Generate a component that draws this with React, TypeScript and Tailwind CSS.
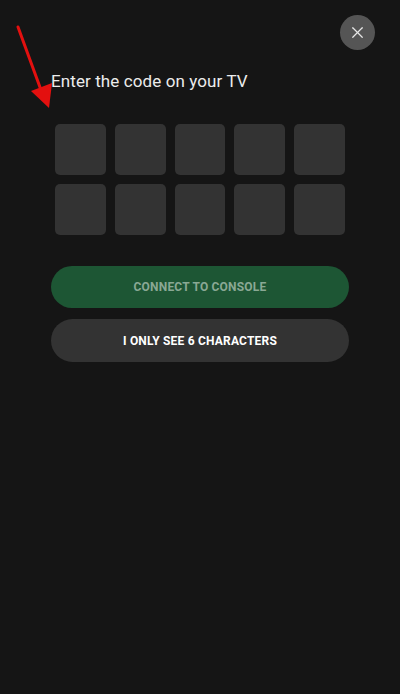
import { X } from "lucide-react";

const codeSlots = Array.from({ length: 10 }, (_, i) => i);

export default function App() {
    return (
        <div
            className="relative h-[694px] w-[400px] overflow-hidden bg-[#151515]"
            style={{ fontFamily: "Roboto, 'Liberation Sans', sans-serif" }}
        >
            {/* Close button */}
            <div className="flex justify-end px-[25px] pt-[15px]">
                <button
                    type="button"
                    aria-label="Close"
                    className="flex h-[35px] w-[35px] items-center justify-center rounded-full bg-[#555555]"
                >
                    <X className="h-[19px] w-[19px] text-[#e6e6e6]" strokeWidth={1.5} />
                </button>
            </div>

            <div className="px-[51px]">
                <h1 className="mt-[21px] text-[17px] leading-[20px] tracking-[0.1px] text-[#ececec]">
                    Enter the code on your TV
                </h1>

                {/* Code input grid */}
                <div className="mt-[33px] grid grid-cols-5 gap-[9px] px-[4px]">
                    {codeSlots.map((i) => (
                        <div key={i} className="h-[51px] rounded-[5px] bg-[#333333]" />
                    ))}
                </div>

                <div className="mt-[31px] flex flex-col gap-[11px]">
                    <button
                        type="button"
                        disabled
                        className="flex h-[42px] w-full items-center justify-center rounded-full bg-[#1d5634] text-[12px] font-bold tracking-[0.2px] text-[#8aa894]"
                    >
                        CONNECT TO CONSOLE
                    </button>
                    <button
                        type="button"
                        className="flex h-[43px] w-full items-center justify-center rounded-full bg-[#333333] text-[12px] font-bold tracking-[0.2px] text-white"
                    >
                        I ONLY SEE 6 CHARACTERS
                    </button>
                </div>
            </div>

            {/* Red annotation arrow */}
            <svg
                className="pointer-events-none absolute left-0 top-0"
                width="70"
                height="120"
                viewBox="0 0 70 120"
            >
                <line x1="18" y1="27" x2="41" y2="90" stroke="#e3100f" strokeWidth="3" strokeLinecap="round" />
                <polygon points="31,91 52,83 49,108" fill="#e3100f" />
            </svg>
        </div>
    );
}
